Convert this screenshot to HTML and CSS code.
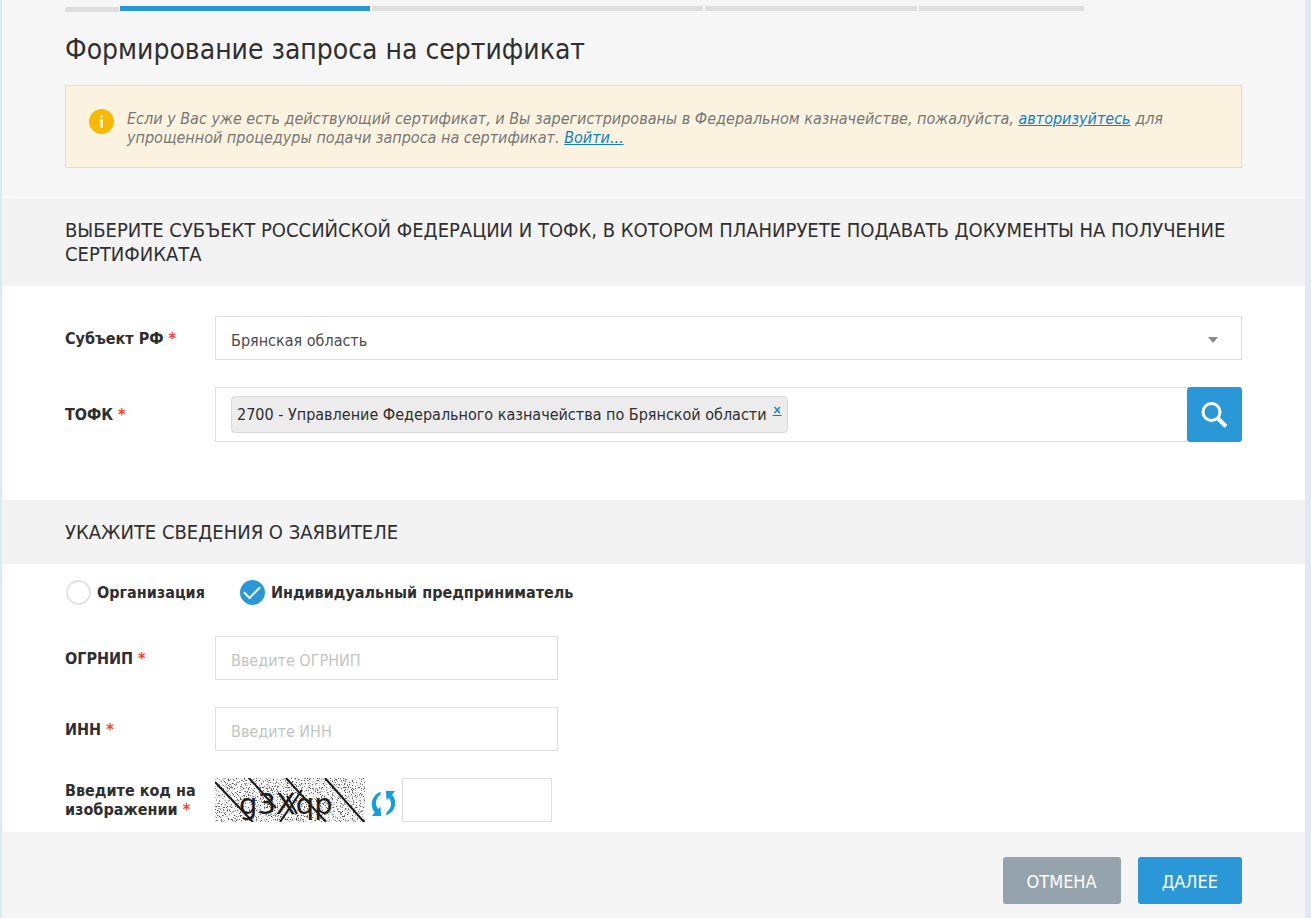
FILE: index.html
```html
<!DOCTYPE html>
<html lang="ru">
<head>
<meta charset="utf-8">
<meta name="viewport" content="width=device-width, initial-scale=1">
<title>Формирование запроса на сертификат</title>
<link rel="stylesheet" href="styles.css">
</head>
<body>
<main class="page">
  <header class="intro">
    <div class="steps" aria-hidden="true">
      <span class="step step-first"></span>
      <span class="step step-active"></span>
      <span class="step step-third"></span>
      <span class="step step-fourth"></span>
      <span class="step step-fifth"></span>
      <span class="step-rest"></span>
    </div>
    <h1 class="title">Формирование запроса на сертификат</h1>
    <div class="notice">
      <svg class="notice-icon" viewBox="0 0 25 25" aria-hidden="true">
        <circle cx="12.5" cy="12.5" r="12.5" fill="#f8ba00"/>
        <rect x="11.3" y="6.3" width="2.6" height="2.4" fill="#fdf3d3"/>
        <path d="M10.5 10.5h3.4v8.3h-2.6v-6.4h-.8z" fill="#fdf3d3"/>
      </svg>
      <p class="notice-text">Если у Вас уже есть действующий сертификат, и Вы зарегистрированы в Федеральном казначействе, пожалуйста, <a href="#login">авторизуйтесь</a> для упрощенной процедуры подачи запроса на сертификат. <a href="#login">Войти...</a></p>
    </div>
  </header>

  <form class="request">
    <h2 class="section-title">Выберите субъект Российской Федерации и ТОФК, в котором планируете подавать документы на получение сертификата</h2>
    <section class="section section-office">
      <div class="row">
        <label class="label" for="region">Субъект РФ <span class="required">*</span></label>
        <div class="select-wrap">
          <select class="control select" id="region">
            <option>Брянская область</option>
          </select>
          <svg class="select-arrow" viewBox="0 0 10 6" aria-hidden="true"><path d="M0 0h10L5 6z" fill="#8a8a8a"/></svg>
        </div>
      </div>
      <div class="row">
        <span class="label" id="office-label">ТОФК <span class="required">*</span></span>
        <div class="lookup" role="group" aria-labelledby="office-label">
          <div class="lookup-box">
            <span class="tag">2700 - Управление Федерального казначейства по Брянской области <a class="tag-remove" href="#remove" aria-label="Удалить">×</a></span>
          </div>
          <button class="lookup-button" type="button" aria-label="Найти">
            <svg class="lookup-icon" viewBox="0 0 28 28" fill="none" stroke="#fff" aria-hidden="true">
              <circle cx="10.500" cy="11" r="8.500" stroke-width="3"/>
              <path d="M16.500 17l8.500 8.500" stroke-width="4"/>
            </svg>
          </button>
        </div>
      </div>
    </section>

    <h2 class="section-title">Укажите сведения о заявителе</h2>
    <section class="section section-applicant">
      <div class="choices">
        <label class="choice"><input class="radio" type="radio" name="kind">Организация</label>
        <label class="choice"><input class="radio" type="radio" name="kind" checked>Индивидуальный предприниматель</label>
      </div>
      <div class="row">
        <label class="label" for="ogrnip">ОГРНИП <span class="required">*</span></label>
        <input class="control text" id="ogrnip" type="text" placeholder="Введите ОГРНИП">
      </div>
      <div class="row">
        <label class="label" for="inn">ИНН <span class="required">*</span></label>
        <input class="control text" id="inn" type="text" placeholder="Введите ИНН">
      </div>
      <div class="row">
        <label class="label" for="code">Введите код на изображении <span class="required">*</span></label>
        <div class="captcha">
          <svg class="captcha-image" viewBox="0 0 150 44" role="img" aria-label="Код">
            <defs>
              <filter id="grain" x="0" y="0" width="100%" height="100%" color-interpolation-filters="sRGB">
                <feTurbulence type="fractalNoise" baseFrequency="0.75" numOctaves="2" seed="7"/>
                <feColorMatrix type="matrix" values="0 0 0 0 0.35  0 0 0 0 0.35  0 0 0 0 0.35  8 0 0 0 -4.5"/>
              </filter>
            </defs>
            <rect width="150" height="44" fill="#f8f8f8"/>
            <rect width="150" height="44" filter="url(#grain)"/>
            <g stroke="#1a1a1a" stroke-width="2" fill="none">
              <path d="M0 4l38 40M34 0l27 30M71 0l40 44M110 0l39 44M65 44l22-32M72 18l10 18"/>
            </g>
            <text class="captcha-text" x="24" y="36">g3Xqp</text>
          </svg>
          <button class="refresh" type="button" aria-label="Обновить код">
            <svg class="refresh-icon" viewBox="0 0 26 26" aria-hidden="true">
              <g fill="#129fdd">
                <path d="M15.500 0h9.500l-3 3.800c5.500 6.500 4.300 17-6 21.400v-2.800c5.500-4 6.300-10.400 2.600-15.200L16.200 9.500z"/>
                <path transform="rotate(180 13 13)" d="M15.500 0h9.500l-3 3.800c5.500 6.500 4.300 17-6 21.400v-2.800c5.500-4 6.300-10.400 2.600-15.200L16.200 9.500z"/>
              </g>
            </svg>
          </button>
          <input class="control code" id="code" type="text">
        </div>
      </div>
    </section>

    <footer class="actions">
      <button class="button button-cancel" type="button">ОТМЕНА</button>
      <button class="button button-next" type="submit">ДАЛЕЕ</button>
    </footer>
  </form>
</main>
</body>
</html>
```
FILE: styles.css
```css
* { box-sizing: border-box; }

body {
  margin: 0;
  background: #fff;
  color: #2f2f2f;
  font: 16px/19px "DejaVu Sans Condensed", "DejaVu Sans", sans-serif;
}

button, input, select { font: inherit; color: inherit; }
a { color: #1280c4; }

.page {
  display: flex;
  flex-direction: column;
  min-height: 100vh;
  border-left: 2px solid #dbeaf3;
  border-right: 6px solid #dcebf4;
}

.intro {
  padding: 6px 63px 29px;
  background: #f6f6f6;
}

.steps { display: flex; align-items: flex-start; gap: 2px; }
.step { height: 5px; background: #dedede; }
.step-first { flex: 54 1 0; margin: 1px -1px 0 0; }
.step-active { flex: 250 1 0; background: #2a98d6; }
.step-third { flex: 332 1 0; }
.step-fourth { flex: 212 1 0; }
.step-fifth { flex: 165 1 0; }
.step-rest { flex: 156 1 0; }

.title {
  margin: 20px 0 18px;
  font-size: 28px;
  line-height: 35px;
  font-weight: 400;
}

.notice {
  display: flex;
  gap: 13px;
  padding: 23px;
  border: 1px solid #efdfae;
  background: #fbf3df;
  color: #777;
}
.notice-icon { flex: none; width: 25px; height: 25px; }
.notice-text { margin: 0 0 -3px; font-style: italic; }

.request { display: flex; flex: 1; flex-direction: column; }

.section-title {
  margin: 0;
  padding: 20px 63px;
  background: #f3f3f3;
  font-size: 20px;
  line-height: 24px;
  font-weight: 400;
  text-transform: uppercase;
}
.section-title:first-child { border-top: 1px solid #fff; }

.section { display: flex; flex-direction: column; gap: 27px; }
.section-office { padding: 30px 63px 58px; }
.section-applicant { padding: 16px 63px 10px; }

.row {
  display: grid;
  grid-template-columns: 138px minmax(0, 1fr);
  column-gap: 12px;
  align-items: center;
}
.label { font-weight: 700; }
.required { color: #ff4019; }

.control {
  height: 44px;
  padding: 5px 15px 0;
  border: 1px solid #dedede;
  border-radius: 0;
  background: #fff;
}
.control::placeholder { color: #c4c4c4; opacity: 1; }
.text { width: 343px; max-width: 100%; }
.code { width: 150px; }

.select-wrap { position: relative; }
.select { display: block; width: 100%; appearance: none; color: #4a4a4a; }
.select-arrow {
  position: absolute;
  top: 21px;
  right: 24px;
  width: 10px;
  height: 6px;
  pointer-events: none;
}

.lookup { display: flex; }
.lookup-box {
  flex: 1;
  padding: 8px 15px;
  border: 1px solid #dedede;
  border-right: 0;
}
.tag {
  display: inline-flex;
  gap: 6px;
  padding: 8px 5px;
  border: 1px solid #d9d9d9;
  border-radius: 4px;
  background: #ececec;
}
.tag-remove { font-size: 12px; line-height: 11px; font-weight: 700; }
.lookup-button {
  display: grid;
  place-items: center;
  width: 55px;
  padding: 0;
  border: 0;
  border-radius: 3px;
  background: #2a98d6;
}
.lookup-icon { width: 28px; height: 28px; }

.choices { display: flex; flex-wrap: wrap; gap: 34px; margin-bottom: 4px; }
.choice { display: flex; align-items: center; gap: 6px; font-weight: 700; }
.radio {
  display: grid;
  place-items: center;
  width: 25px;
  height: 25px;
  margin: 0 0 0 1px;
  border: 2px solid #e2e2e2;
  border-radius: 50%;
  background: #fff;
  appearance: none;
}
.radio:checked { border-color: #2a98d6; background: #2a98d6; }
.radio:checked::after {
  content: "";
  width: 14px;
  height: 7px;
  margin-bottom: 4px;
  border: solid #fff;
  border-width: 0 0 2px 2px;
  transform: rotate(-45deg);
}

.captcha { display: flex; align-items: center; gap: 6px; }
.captcha-image { width: 150px; height: 44px; }
.captcha-text { font: 29px "DejaVu Sans", sans-serif; fill: #1c1c1c; }
.refresh { display: flex; padding: 6px 0 0; border: 0; background: none; }
.refresh-icon { width: 25px; height: 25px; }

.actions {
  display: flex;
  flex: 1;
  align-items: flex-start;
  justify-content: flex-end;
  gap: 17px;
  padding: 25px 63px 14px;
  background: #f5f5f5;
}
.button {
  height: 47px;
  padding: 2px 24px 0;
  border: 0;
  border-radius: 3px;
  color: #fff;
  font-size: 18px;
}
.button-cancel { background: #95a3ac; }
.button-next { background: #2a98d6; }
```
